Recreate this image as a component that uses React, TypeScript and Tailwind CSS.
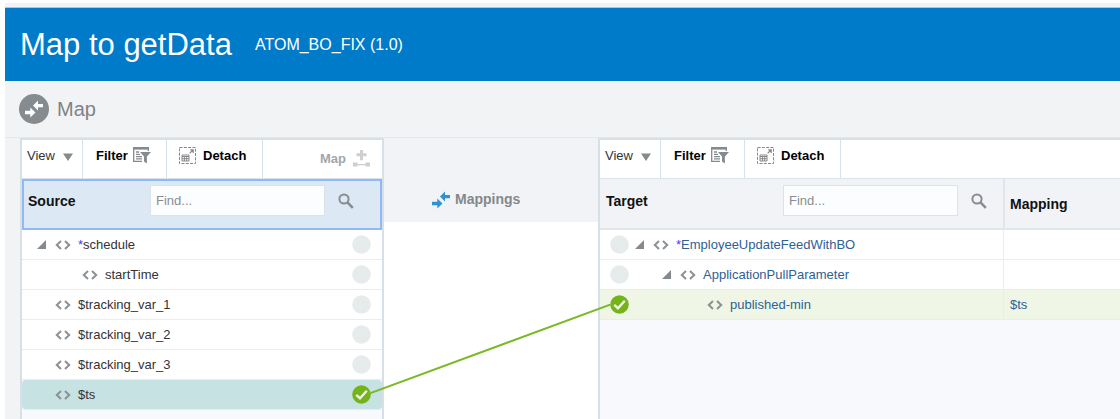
import React from "react";

type Node = {
  label: string;
  depth: number;
  required?: boolean;
  expandable?: boolean;
  mapped?: boolean;
  mapping?: string;
};

const sourceNodes: Node[] = [
  { label: "schedule", depth: 0, required: true, expandable: true },
  { label: "startTime", depth: 1 },
  { label: "$tracking_var_1", depth: 0 },
  { label: "$tracking_var_2", depth: 0 },
  { label: "$tracking_var_3", depth: 0 },
  { label: "$ts", depth: 0, mapped: true },
];

const targetNodes: Node[] = [
  { label: "EmployeeUpdateFeedWithBO", depth: 0, required: true, expandable: true },
  { label: "ApplicationPullParameter", depth: 1, expandable: true },
  { label: "published-min", depth: 2, mapped: true, mapping: "$ts" },
];

const indent = ["pl-0", "pl-[27px]", "pl-[54px]"];

function CodeIcon() {
  return (
    <svg className="h-3 w-4 shrink-0" viewBox="0 0 16 12" fill="none" stroke="#8b9094" strokeWidth="2">
      <path d="M6 2 1.8 6 6 10M10 2l4.2 4L10 10" />
    </svg>
  );
}

function MatchDot({ mapped }: { mapped?: boolean }) {
  return (
    <svg className="size-[19px] shrink-0" viewBox="0 0 19 19">
      <circle cx="9.5" cy="9.5" r="9.3" fill={mapped ? "#74b41a" : "#e6eceb"} />
      {mapped && <path d="M4.2 9.8 8 13.2 14.8 5.8" fill="none" stroke="#f0f6e6" strokeWidth="2.4" />}
    </svg>
  );
}

function Twisty({ label }: { label: string }) {
  return (
    <button type="button" aria-label={"Collapse " + label} className="block size-[9px]">
      <svg className="size-[9px]" viewBox="0 0 9 9">
        <path d="M9 0v9H0z" fill="#858a8e" />
      </svg>
    </button>
  );
}

function TreeLabel({ node }: { node: Node }) {
  return (
    <div className={"flex items-center " + indent[node.depth]}>
      <div className="w-[18px] shrink-0">{node.expandable && <Twisty label={node.label} />}</div>
      <CodeIcon />
      <span className="ml-[7px] whitespace-nowrap">
        {node.required && <span className="text-[#3a3aff]">*</span>}
        {node.label}
      </span>
    </div>
  );
}

function FilterIcon() {
  return (
    <svg className="h-[17px] w-[18px]" viewBox="0 0 18 17">
      <path d="M0 0h16v2.6H0z" fill="#858a8e" />
      <path
        d="M.7 2v13M0 14.4h9M15.3 2v2M3 5h3M3 7.300h4M3 9.600h6M3 11.900h6"
        fill="none"
        stroke="#858a8e"
        strokeWidth="1.3"
      />
      <path d="M7 5H18L13.9 9.600V16.500L11 14.500V9.600z" fill="#858a8e" />
    </svg>
  );
}

function DetachIcon() {
  return (
    <svg className="size-[17px]" viewBox="0 0 17 17" fill="none" stroke="#85898d">
      <path d="M.5.5h16v16H.5z" strokeDasharray="3 1.300" />
      <path d="M3 8h7v6H3zM3 9.500h7M3 11.700h7M5.400 9v5M7.700 9v5" />
      <path d="M10.600 6.400 14 3M11.200 2.800h3V6" strokeWidth="1.200" />
    </svg>
  );
}

function SearchIcon() {
  return (
    <svg className="size-4" viewBox="0 0 16 16" fill="none" stroke="#888d91">
      <circle cx="6" cy="6" r="4.6" strokeWidth="2" />
      <path d="M9.2 9.2 14.8 14.8" strokeWidth="2.600" />
    </svg>
  );
}

function Arrows({ className }: { className: string }) {
  return (
    <svg className={className} viewBox="0 0 18 18" fill="currentColor">
      <path d="M13 .5v3.400h5v3.400h-5v3.200L8 5.500z" />
      <path d="M5.300 7.500 10.500 12.500 5.300 17.500V14.200H0v-3.400h5.300z" />
    </svg>
  );
}

function Toolbar({ withMap }: { withMap?: boolean }) {
  return (
    <div className="flex h-[39px] border-b border-[#dbe4ea] bg-white text-[13px] leading-[18px] text-black">
      <button type="button" className="flex w-[61px] shrink-0 items-start border-r border-[#d9e1e8] pt-[7px] pl-[5px] text-[#333]">
        View
        <svg className="mt-[6px] ml-2 h-2 w-[10px]" viewBox="0 0 10 8">
          <path d="M0 .5h10L5 8z" fill="#858a8e" />
        </svg>
      </button>
      <button type="button" className="flex w-[84px] shrink-0 items-start gap-[5px] border-r border-[#d9e1e8] pt-[7px] pl-[13px] font-bold">
        Filter
        <FilterIcon />
      </button>
      <button type="button" className="flex w-[96px] shrink-0 items-start gap-[7px] border-r border-[#d9e1e8] pt-[7px] pl-3 font-bold">
        <DetachIcon />
        Detach
      </button>
      {withMap && (
        <button type="button" disabled className="ml-auto flex items-start gap-[7px] pt-[10px] pr-3 font-bold text-[#a3a6a9]">
          Map
          <svg className="h-[17px] w-[17px]" viewBox="0 0 17 17" fill="#cdcfd1">
            <path d="M7 0h3v3.300h3.500v3H10v4H7v-4H3.500v-3H7zM0 12.500h4.500v4H0zM12.500 12.500H17v4h-4.500zM4.500 14h8v1.200h-8z" />
          </svg>
        </button>
      )}
    </div>
  );
}

function FindHeader({ id, title }: { id: string; title: string }) {
  return (
    <div className="flex items-center">
      <label htmlFor={id} className="text-sm font-bold text-[#111]">
        {title}
      </label>
      <input
        id={id}
        type="text"
        placeholder="Find..."
        className="ml-auto h-[31px] w-[175px] border border-[#dde2e8] bg-[#fcfdff] px-[5px] text-[13px] text-[#333] placeholder:text-[#8b8d90]"
      />
      <button type="button" aria-label={"Search " + title} className="ml-[13px]">
        <SearchIcon />
      </button>
    </div>
  );
}

export default function App() {
  return (
    <div className="flex min-h-screen flex-col overflow-x-hidden bg-white pt-[3px] pl-[5px] font-['Liberation_Sans',Arial,sans-serif] text-[13px] text-[#333]">
      <div className="flex flex-1 flex-col bg-[#f2f3f5]">
        <header className="mt-1 flex h-[74px] items-center border-t border-[#a9c8de] bg-[#007bc9] pl-[15px] text-white">
          <h1 className="text-[31px] leading-10">Map to getData</h1>
          <span className="ml-[23px] text-base">ATOM_BO_FIX (1.0)</span>
        </header>

        <div className="flex h-[57px] items-center border-b border-[#e5e8eb] pl-[14px]">
          <span className="flex size-[30px] items-center justify-center rounded-full bg-[#858b8f] text-white">
            <Arrows className="size-[18px]" />
          </span>
          <h2 className="ml-2 text-xl text-[#808386]">Map</h2>
        </div>

        <main className="flex flex-1 pl-[15px]">
          <section className="flex w-[364px] shrink-0 flex-col border-2 border-b-0 border-[#d7dfe7] bg-[#f7f9fd]">
            <Toolbar withMap />
            <div className="h-[51px] border-2 border-[#8fbaf4] bg-[#dce8f4] pt-1 pr-[26px] pl-1">
              <FindHeader id="find-source" title="Source" />
            </div>
            <ul>
              {sourceNodes.map((node) => (
                <li
                  key={node.label}
                  className={
                    "flex h-[30px] items-center justify-between border-b border-[#ebecee] pr-[11px] pl-[15px] " +
                    (node.mapped ? "rounded-sm bg-[#c7e2e3]" : "bg-white")
                  }
                >
                  <TreeLabel node={node} />
                  <MatchDot mapped={node.mapped} />
                </li>
              ))}
            </ul>
          </section>

          <section className="relative flex w-[214px] shrink-0 flex-col bg-white">
            <div className="flex h-[84px] items-end bg-[#f2f3f6] pb-[13px] pl-12">
              <Arrows className="size-[18px] text-[#3291cf]" />
              <h3 className="ml-[5px] text-sm leading-5 font-bold text-[#85888b]">Mappings</h3>
            </div>
            <div className="pointer-events-none absolute top-[166px] -right-[14px] -left-[16px] h-[90px]">
              <svg className="size-full">
                <line x1="0" y1="100%" x2="100%" y2="0" stroke="#7bb927" strokeWidth="2" />
              </svg>
            </div>
          </section>

          <section className="min-w-0 flex-1 border-t-2 border-l-2 border-[#d7dfe7] bg-[#f7f9fd]">
            <Toolbar />
            <table className="w-full table-fixed border-separate border-spacing-0">
              <colgroup>
                <col />
                <col className="w-[117px]" />
              </colgroup>
              <thead>
                <tr className="h-[51px] bg-[#f2f3f7]">
                  <th className="border-b-2 border-[#e0e6ea] p-0 pt-1.5 pr-4 pl-1.5 text-left align-top font-normal">
                    <FindHeader id="find-target" title="Target" />
                  </th>
                  <th className="border-b-2 border-l-2 border-[#e0e6ea] p-0 pl-[5px] text-left text-sm text-[#111]">
                    Mapping
                  </th>
                </tr>
              </thead>
              <tbody className="text-[#2e6194]">
                {targetNodes.map((node) => (
                  <tr key={node.label} className={"h-[30px] " + (node.mapped ? "bg-[#f0f6e6]" : "bg-white")}>
                    <td className="border-b border-[#ebecee] p-0 pl-[10px]">
                      <div className="flex items-center gap-[6px]">
                        <MatchDot mapped={node.mapped} />
                        <TreeLabel node={node} />
                      </div>
                    </td>
                    <td className="border-b border-l border-[#ebecee] p-0 pl-1.5">{node.mapping}</td>
                  </tr>
                ))}
              </tbody>
            </table>
          </section>
        </main>
      </div>
    </div>
  );
}
